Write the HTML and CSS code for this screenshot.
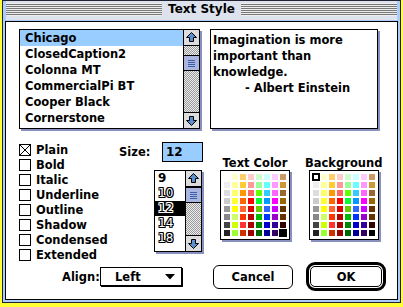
FILE: index.html
```html
<html lang="en"><head>
    <meta charset="UTF-8">
    <meta name="viewport" content="width=device-width, initial-scale=1.0">
    <title>Text Style</title>
    <link rel="stylesheet" href="styles.css">
</head>
<body>
    <div class="window">
        <div class="titlebar">
            <div class="stripes"><span class="title">Text Style</span></div>
        </div>
        <div class="content">
            <div class="top">
                <div class="listbox fontlist">
                    <ul class="items">
                        <li class="sel">Chicago</li>
                        <li>ClosedCaption2</li>
                        <li>Colonna MT</li>
                        <li>CommercialPi BT</li>
                        <li>Cooper Black</li>
                        <li>Cornerstone</li>
                    </ul>
                    <div class="scrollbar">
                        <div class="arrow up"><svg width="15" height="15" viewBox="0 0 15 15"><path d="M7.5 2.5 L12.5 7.5 L9.5 7.5 L9.5 11.5 L5.5 11.5 L5.5 7.5 L2.5 7.5 Z" fill="#5b8fd0" stroke="#000" stroke-width="1"/></svg></div>
                        <div class="track"><div class="thumb"></div></div>
                        <div class="arrow down"><svg width="15" height="15" viewBox="0 0 15 15"><path d="M7.5 12.5 L12.5 7.5 L9.5 7.5 L9.5 3.5 L5.5 3.5 L5.5 7.5 L2.5 7.5 Z" fill="#5b8fd0" stroke="#000" stroke-width="1"/></svg></div>
                    </div>
                </div>
                <div class="quote">
                    Imagination is more<br>
                    important than<br>
                    knowledge.<br>
                    <span class="author">- Albert Einstein</span>
                </div>
            </div>

            <div class="middle">
                <ul class="styles">
                    <li><span class="box"><svg width="10" height="10" viewBox="0 0 10 10"><path d="M0 0 L10 10 M10 0 L0 10" stroke="#000" stroke-width="1"/></svg></span>Plain</li>
                    <li><span class="box"></span>Bold</li>
                    <li><span class="box"></span>Italic</li>
                    <li><span class="box"></span>Underline</li>
                    <li><span class="box"></span>Outline</li>
                    <li><span class="box"></span>Shadow</li>
                    <li><span class="box"></span>Condensed</li>
                    <li><span class="box"></span>Extended</li>
                </ul>

                <div class="sizecol">
                    <div class="sizerow">
                        <label for="size">Size:</label>
                        <div id="size" class="field">12</div>
                    </div>
                    <div class="listbox sizelist">
                        <ul class="sizes">
                            <li class="solid">9</li>
                            <li>10</li>
                            <li class="sel">12</li>
                            <li>14</li>
                            <li>18</li>
                        </ul>
                        <div class="scrollbar">
                            <div class="arrow up"><svg width="15" height="15" viewBox="0 0 15 15"><path d="M7.5 2.5 L12.5 7.5 L9.5 7.5 L9.5 11.5 L5.5 11.5 L5.5 7.5 L2.5 7.5 Z" fill="#5b8fd0" stroke="#000" stroke-width="1"/></svg></div>
                            <div class="track top-thumb"><div class="thumb"></div></div>
                            <div class="arrow down"><svg width="15" height="15" viewBox="0 0 15 15"><path d="M7.5 12.5 L12.5 7.5 L9.5 7.5 L9.5 3.5 L5.5 3.5 L5.5 7.5 L2.5 7.5 Z" fill="#5b8fd0" stroke="#000" stroke-width="1"/></svg></div>
                        </div>
                    </div>
                </div>

                <div class="colors">
                    <div class="picker">
                        <h3>Text Color</h3>
                        <div class="grid" data-pick="63"></div>
                    </div>
                    <div class="picker">
                        <h3>Background</h3>
                        <div class="grid" data-pick="0"></div>
                    </div>
                </div>
            </div>

            <div class="bottom">
                <label class="align-label">Align:</label>
                <div class="popup">
                    <span>Left</span>
                    <svg width="10" height="6" viewBox="0 0 10 6"><polygon points="0,0 10,0 5,5.5" fill="#000"/></svg>
                </div>
                <button class="btn cancel" type="button">Cancel</button>
                <div class="default-ring"><button class="btn ok" type="button">OK</button></div>
            </div>
        </div>
    </div>

    <script>
        const colors = [
            '#ffffff', '#ffffcc', '#ffcc66', '#ffcccc', '#ccffcc', '#ccffff', '#ffccff', '#cc9966',
            '#eeeeee', '#ffff99', '#ffcc33', '#ff9999', '#99ff99', '#66ffff', '#ff99ff', '#cc9933',
            '#dddddd', '#ffff66', '#ff9900', '#ff6666', '#66ff00', '#33ccff', '#ff66ff', '#996633',
            '#cccccc', '#ffff33', '#ff6600', '#ff0000', '#00ff33', '#0099ff', '#ff00ff', '#996600',
            '#999999', '#ffff00', '#ff6633', '#dd0000', '#66cc00', '#3366ff', '#cc00ff', '#663300',
            '#888888', '#ccff66', '#ff3300', '#bb0000', '#00bb00', '#0033ff', '#9900cc', '#663300',
            '#444444', '#ccff00', '#ff3333', '#aa0000', '#008800', '#0000cc', '#330099', '#330000',
            '#222222', '#99ff33', '#cc3300', '#990000', '#006600', '#000099', '#330066', '#000000'
        ];

        document.querySelectorAll('.grid').forEach(grid => {
            const pick = Number(grid.dataset.pick);
            colors.forEach((color, i) => {
                const swatch = document.createElement('span');
                swatch.className = i === pick ? 'swatch picked' : 'swatch';
                swatch.style.background = color;
                grid.appendChild(swatch);
            });
        });
    </script>
</body></html>
```

FILE: styles.css
```css
* {
    box-sizing: border-box;
}
body {
    margin: 0;
    background: #ffff33;
    font-family: "DejaVu Sans", sans-serif;
    font-weight: bold;
    font-size: 11.5px;
    color: #000;
}

/* window frame */
.window {
    width: 399px;
    height: 303px;
    margin-left: 2px;
    border: 1px solid #223;
    background: #aaccff;
    padding: 0 2px 2px;
    display: flex;
    flex-direction: column;
}
.titlebar {
    height: 20px;
    padding: 2px 0 3px;
    background: #dde2ee;
    border: 1px solid #aaccff;
    border-top: none;
}
.stripes {
    height: 13px;
    background: repeating-linear-gradient(#eeeeee 0 1px, #777777 1px 2px);
    display: flex;
    justify-content: center;
    align-items: center;
}
.title {
    background: #dde2ee;
    padding: 0 6px;
    height: 15px;
    line-height: 15px;
    font-size: 12px;
}
.content {
    flex: 1;
    background: #fff;
    border: 1px solid #000;
    padding: 7px 0 0 13px;
}

/* lists */
.top {
    display: flex;
    gap: 10px;
    height: 100px;
}
.listbox {
    border: 1px solid #000;
    box-shadow: 2px 2px 0 #8890c0;
    display: flex;
    background: #fff;
}
.fontlist {
    width: 181px;
    height: 100px;
}
.items,
.sizes {
    flex: 1;
    list-style: none;
    margin: 0;
    padding: 0;
}
.items li {
    height: 16px;
    line-height: 16px;
    padding-left: 5px;
    white-space: nowrap;
}
.items li.sel {
    background: #99ccff;
}
.scrollbar {
    width: 16px;
    border-left: 1px solid #000;
    display: flex;
    flex-direction: column;
}
.arrow {
    height: 16px;
    background: #dddddd;
    display: flex;
    align-items: center;
    justify-content: center;
}
.arrow.up {
    border-bottom: 1px solid #000;
}
.arrow.down {
    border-top: 1px solid #000;
}
.track {
    flex: 1;
    background: repeating-conic-gradient(#999999 0 25%, #eeeeee 0 50%) 0 0 / 2px 2px;
    padding-top: 9px;
}
.track.top-thumb {
    padding-top: 0;
}
.thumb {
    height: 16px;
    border-top: 1px solid #000;
    border-bottom: 1px solid #000;
    background:
        repeating-linear-gradient(#3c5fa8 0 1px, transparent 1px 2px) center / 7px 7px no-repeat,
        #aab6e0;
}
.quote {
    width: 168px;
    height: 100px;
    border: 1px solid #000;
    box-shadow: 2px 2px 0 #8890c0;
    padding: 2px 2px;
    line-height: 16px;
    white-space: nowrap;
}
.author {
    padding-left: 32px;
}

/* middle */
.middle {
    display: flex;
    margin-top: 13px;
    height: 120px;
}
.styles {
    width: 100px;
    list-style: none;
    margin: 0;
    padding: 0;
}
.styles li {
    height: 15px;
    display: flex;
    align-items: center;
    gap: 5px;
}
.box {
    width: 12px;
    height: 12px;
    border: 1px solid #000;
    background: #fff;
    display: flex;
}
.sizecol {
    width: 101px;
}
.sizerow {
    display: flex;
    align-items: center;
    height: 20px;
}
.sizerow label {
    width: 43px;
}
.field {
    width: 41px;
    height: 20px;
    border: 1px solid #000;
    background: #99ccff;
    padding-left: 3px;
    line-height: 18px;
    font-size: 12px;
}
.sizelist {
    margin: 8px 0 0 35px;
    width: 48px;
    height: 82px;
}
.sizes li {
    height: 15px;
    line-height: 15px;
    padding-left: 3px;
    font-size: 12px;
    font-weight: normal;
    color: #fff;
    text-shadow: 1px 0 #000, -1px 0 #000, 0 1px #000, 0 -1px #000,
        1px 1px #000, -1px -1px #000, 1px -1px #000, -1px 1px #000;
}
.sizes li.solid {
    font-weight: bold;
    color: #000;
    text-shadow: none;
}
.sizes li.sel {
    background: #000;
    color: #000;
    text-shadow: 1px 0 #fff, -1px 0 #fff, 0 1px #fff, 0 -1px #fff,
        1px 1px #fff, -1px -1px #fff, 1px -1px #fff, -1px 1px #fff;
}

/* colour pickers */
.colors {
    display: flex;
    gap: 15px;
    margin-top: 14px;
}
.picker {
    display: flex;
    flex-direction: column;
    align-items: center;
}
.picker h3 {
    margin: 0;
    font-size: 11.5px;
    height: 14px;
    line-height: 14px;
    white-space: nowrap;
}
.grid {
    display: grid;
    grid-template-columns: repeat(8, 6px);
    grid-auto-rows: 6px;
    gap: 2px;
    padding: 3px;
    border: 1px solid #000;
    box-shadow: 2px 2px 0 #8890c0;
    background: #fff;
}
.swatch.picked {
    border: 1px solid #000;
    outline: 1px solid #000;
}

/* bottom row */
.bottom {
    display: flex;
    align-items: center;
    height: 29px;
}
.align-label {
    margin-left: 43px;
    width: 38px;
}
.popup {
    width: 82px;
    height: 19px;
    border: 1px solid #000;
    box-shadow: 1px 1px 0 #000;
    display: flex;
    align-items: center;
    justify-content: space-between;
    padding: 0 6px 0 14px;
}
.btn {
    font-family: "DejaVu Sans", sans-serif;
    font-weight: bold;
    font-size: 11.5px;
    background: #fff;
    color: #000;
    border: 1px solid #000;
    border-radius: 6px;
    padding: 0;
}
.cancel {
    margin-left: 31px;
    width: 80px;
    height: 24px;
}
.default-ring {
    margin-left: 13px;
    width: 80px;
    height: 29px;
    border: 3px solid #000;
    border-radius: 9px;
    padding: 1px;
    display: flex;
}
.ok {
    flex: 1;
    border-radius: 5px;
}
```
